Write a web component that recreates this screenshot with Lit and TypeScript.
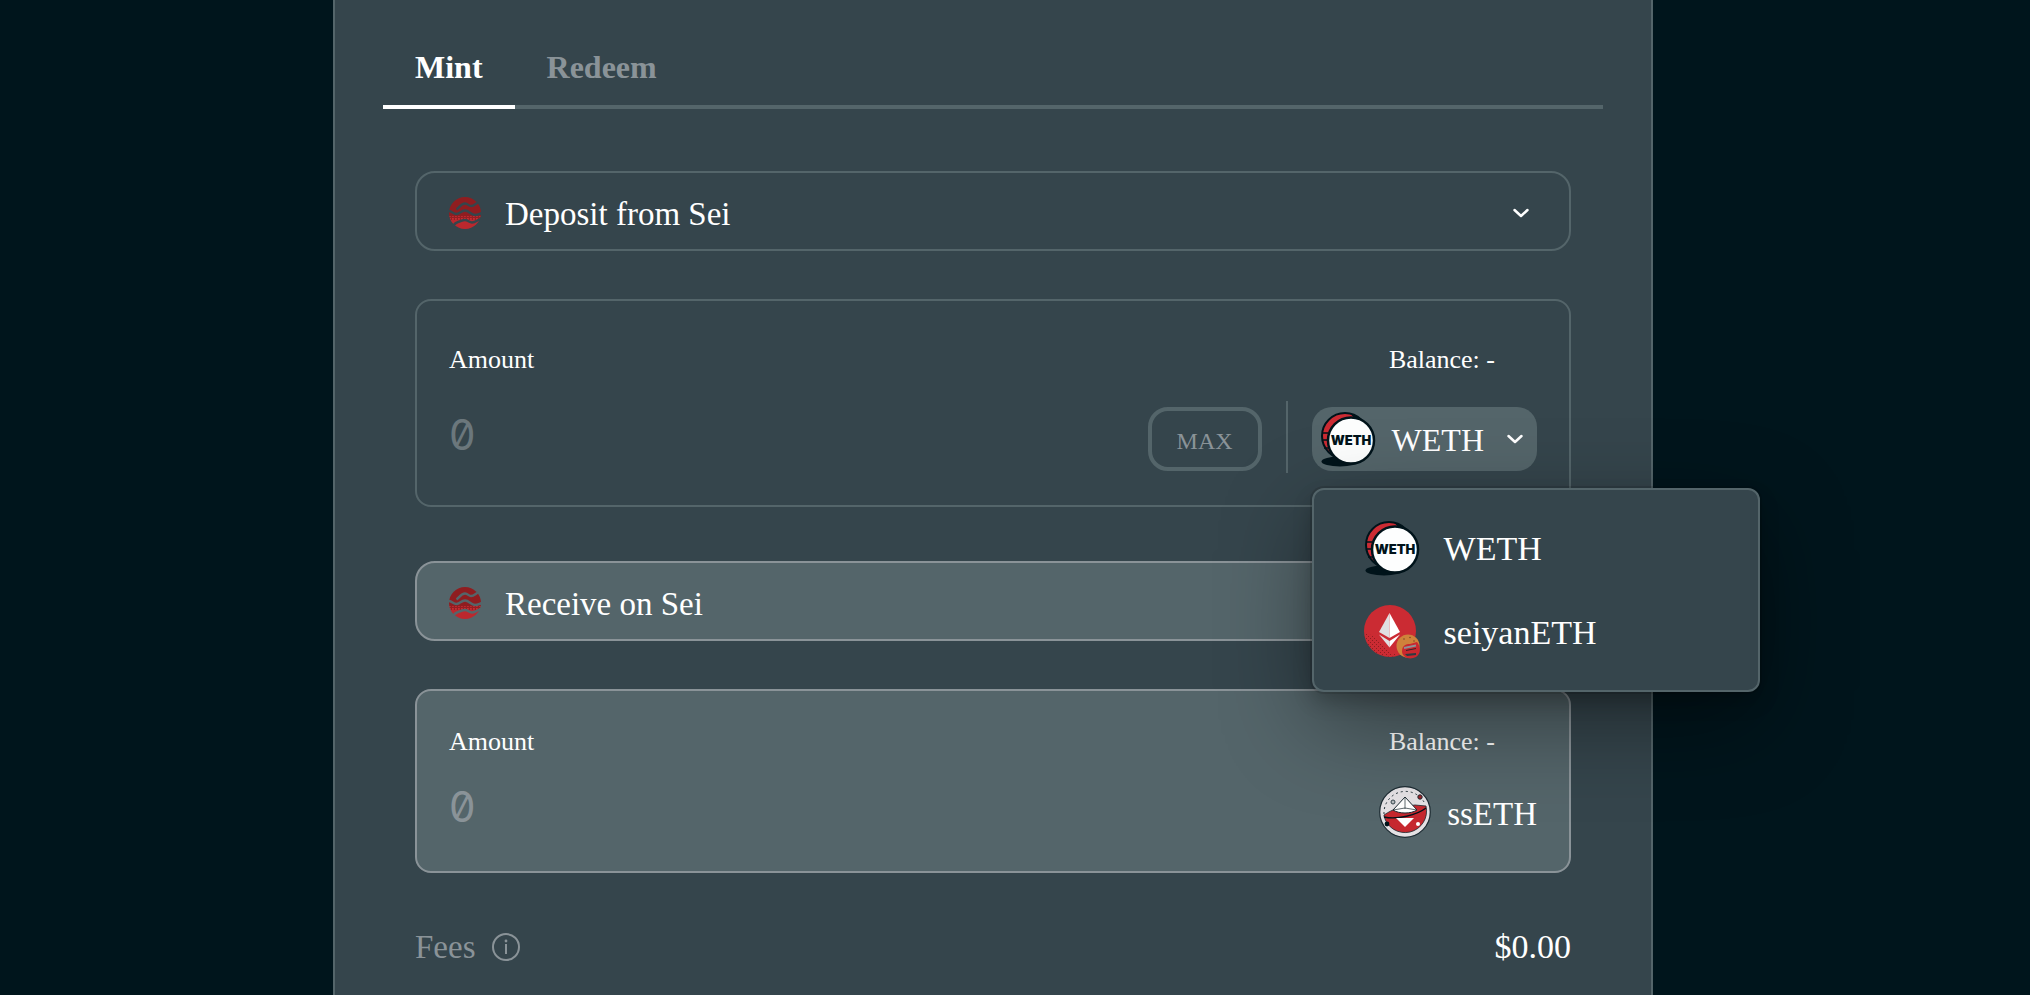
import { LitElement, html, css } from "lit";
import { customElement, property, state } from "lit/decorators.js";

type IconName = "sei" | "weth" | "seiyan" | "sseth" | "chevron" | "info";

const icons: Record<IconName, unknown> = {
  sei: html`<svg viewBox="0 0 32 32" width="32" height="32" aria-hidden="true">
    <defs>
      <pattern id="dots" width="3" height="3" patternUnits="userSpaceOnUse">
        <rect width="3" height="3" fill="#941f22" /><rect width="1.800" height="1.800" fill="#c92b32" />
      </pattern>
      <mask id="waves">
        <circle cx="16" cy="16" r="16" fill="#fff" />
        <g fill="none" stroke="#000" stroke-width="2.400">
          <path d="M7.500 12.500C10 11 12 6.500 16 6.500C19 6.500 19.500 9 22 9C25 9 26 7 29 5.500" />
          <path d="M-1 14C3 14 4 17 7.500 17C11 17 12 13.500 16 13.500C20 13.500 22 18 26 18C29 18 30 17 33 16" />
          <path d="M4 29C6 26 7 25.500 9 25C12 24.500 13 23 16 23C19 23 20 25.500 23 25.500C27 25.500 28 23 32 22" />
        </g>
      </mask>
    </defs>
    <g mask="url(#waves)">
      <rect width="32" height="32" fill="#8f1d20" /><rect y="19" width="32" height="4" fill="url(#dots)" /><rect y="23" width="32" height="9" fill="#bb282e" />
    </g>
  </svg>`,
  weth: html`<svg viewBox="0 0 56 56" width="56" height="56" aria-hidden="true">
    <ellipse cx="20" cy="50.500" rx="18.500" ry="5" fill="#00131a" />
    <circle cx="25" cy="25" r="23" fill="#cc2b33" stroke="#00131a" stroke-width="2" />
    <path d="M2 22h6M2 29h6M4 37h5" stroke="#00131a" stroke-width="1.500" />
    <path d="M30 2.500C37 4 41 8 45 12L37 10Z" fill="#00131a" />
    <circle cx="31" cy="29.500" r="23" fill="#fdfefe" stroke="#00131a" stroke-width="2.500" />
    <text x="31" y="34" text-anchor="middle" font-family="Inter, sans-serif" font-weight="900" font-size="13" fill="#00131a">WETH</text>
  </svg>`,
  seiyan: html`<svg viewBox="0 0 56 56" width="56" height="56" aria-hidden="true">
    <defs><pattern id="grain" width="4" height="4" patternUnits="userSpaceOnUse"><rect width="1" height="1" fill="#8f1d20" /><rect x="2" y="2" width="1" height="1" fill="#8f1d20" /></pattern></defs>
    <circle cx="26" cy="27" r="26" fill="#cb2b33" />
    <path d="M0 30C6 27 18 40 25 47C28 50 33 50 35 51A26 26 0 0 1 0 30Z" fill="url(#grain)" />
    <path d="M25.500 9L15 28L25.500 34Z" fill="#e0dfe2" /><path d="M25.500 9L36 28L25.500 34Z" fill="#fff" />
    <path d="M15 30.500L25.500 37V43.500Z" fill="#e0dfe2" /><path d="M36 30.500L25.500 37V43.500Z" fill="#fff" />
    <circle cx="44" cy="42" r="11.500" fill="#cf823b" />
    <path d="M38 48C38 41 42 40 46 40L53 38C57 43 57 50 52 53C46 56 39 54 38 48Z" fill="#c9282f" />
    <circle cx="40" cy="35" r=".8" fill="#7a4a22" /><circle cx="46" cy="33.500" r=".8" fill="#7a4a22" /><circle cx="50" cy="37" r=".8" fill="#7a4a22" />
    <path d="M40 44L52 41.500" stroke="#8d9296" stroke-width="1.800" />
    <path d="M41 50L52 49V51L43 52Z" fill="#2d3a41" /><path d="M42 46.500L52 44.500" stroke="#3b2026" stroke-width="1" />
  </svg>`,
  sseth: html`<svg viewBox="0 0 52 52" width="52" height="52" aria-hidden="true">
    <circle cx="26" cy="26" r="25.300" fill="#e4e1e4" stroke="#1c2b32" stroke-width="1.200" />
    <path d="M5 28A21.500 21.500 0 0 1 45 16" fill="none" stroke="#26343b" stroke-width="1" stroke-dasharray="2 3" />
    <path d="M5 29C14 23 20 21 36 19L47 20A21.500 21.500 0 0 1 5 30Z" fill="#c6282f" stroke="#1c2b32" stroke-width=".8" />
    <path d="M26 11L14 24C20 28 32 28 38 24Z" fill="#fff" stroke="#1c2b32" stroke-width="1" /><path d="M26 11V23M14 24L26 22L38 24" fill="none" stroke="#1c2b32" stroke-width=".7" />
    <path d="M5 31C18 34 38 29 47 22" fill="none" stroke="#00131a" stroke-width="1.300" />
    <path d="M17 32H35L26 41Z" fill="#fff" />
    <circle cx="41" cy="11" r="2.200" fill="#a32328" stroke="#1c2b32" /><circle cx="14" cy="16" r="2" fill="#b9bdc0" stroke="#35454c" /><circle cx="8" cy="38" r="2.400" fill="#00131a" /><circle cx="39" cy="38" r="2" fill="#fff" />
  </svg>`,
  chevron: html`<svg viewBox="0 0 16 16" width="16" height="16" aria-hidden="true"><path d="M1.500 5L8 11L14.500 5" fill="none" stroke="currentColor" stroke-width="2.500" stroke-linecap="round" stroke-linejoin="round" /></svg>`,
  info: html`<svg viewBox="0 0 28 28" width="28" height="28" aria-hidden="true"><circle cx="14" cy="14" r="13" fill="none" stroke="currentColor" stroke-width="2" /><path d="M14 11V21" stroke="currentColor" stroke-width="2" /><circle cx="14" cy="8" r="1.400" fill="currentColor" /></svg>`,
};

@customElement("app-icon")
export class AppIcon extends LitElement {
  @property() name: IconName = "sei";
  static styles = css`:host { display: flex; flex: none; } svg { display: block; }`;
  render() {
    return icons[this.name];
  }
}

@customElement("app-root")
export class AppRoot extends LitElement {
  @state() private tab = "Mint";
  @state() private token = "WETH";
  @state() private open = true;

  private tokens: { label: string; icon: IconName }[] = [
    { label: "WETH", icon: "weth" },
    { label: "seiyanETH", icon: "seiyan" },
  ];

  static styles = css`
    :host {
      --page: #00151c;
      --card: #35454c;
      --line: #54656a;
      --muted: #8a9398;
      display: block;
      min-height: 100vh;
      background: var(--page);
      color: #fff;
      font: 33px/40px "Liberation Serif", serif;
      overflow: hidden;
    }
    *, *::before { box-sizing: border-box; }
    button {
      font: inherit;
      color: inherit;
      background: none;
      border: 0;
      padding: 0;
      cursor: pointer;
      text-align: left;
    }
    .page { display: flex; justify-content: center; padding-right: 44px; }
    .card {
      width: 100%;
      max-width: 1320px;
      min-height: 100vh;
      padding: 29px 48px 24px;
      background: var(--card);
      border: solid var(--line);
      border-width: 0 2px;
    }
    .tabs { display: flex; box-shadow: inset 0 -4px var(--line); }
    .tab {
      padding: 18px 32px;
      border-bottom: 4px solid transparent;
      font-size: 32px;
      font-weight: 700;
      color: var(--muted);
    }
    .tab.active { color: #fff; border-color: #fff; }
    .form { display: flex; flex-direction: column; gap: 54px; padding: 62px 32px 0; }
    .group { display: flex; flex-direction: column; gap: 48px; }
    .chain {
      display: flex;
      align-items: center;
      gap: 24px;
      width: 100%;
      height: 80px;
      padding: 4px 40px 0 32px;
      border: 2px solid var(--line);
      border-radius: 20px;
    }
    .chain .name { flex: 1; padding-top: 2px; }
    .amount {
      display: flex;
      flex-direction: column;
      gap: 16px;
      padding: 32px;
      border: 2px solid var(--line);
      border-radius: 16px;
    }
    .filled { background: var(--line); border-color: var(--muted); }
    .amount.filled { gap: 8px; padding: 24px 32px; }
    .caption {
      display: flex;
      justify-content: space-between;
      padding: 2px 42px 0 0;
      font-size: 26px;
      line-height: 50px;
    }
    .entry { display: flex; align-items: center; gap: 24px; height: 72px; padding-top: 4px; }
    .filled .entry { padding-top: 2px; }
    input {
      flex: 1;
      min-width: 0;
      align-self: flex-start;
      height: 58px;
      padding: 0;
      border: 0;
      outline: 0;
      background: none;
      color: #fff;
      font: 400 42px Inter, sans-serif;
      font-feature-settings: "zero" 1;
    }
    input::placeholder { color: #6b777c; opacity: 1; }
    .filled input::placeholder { color: var(--muted); }
    .max {
      width: 114px;
      height: 64px;
      padding-top: 4px;
      border: 4px solid var(--line);
      border-radius: 20px;
      font-size: 24px;
      text-align: center;
      color: var(--muted);
    }
    .rule { align-self: flex-end; width: 2px; height: 72px; background: var(--line); }
    .picker { position: relative; }
    .picked {
      display: flex;
      align-items: center;
      gap: 16px;
      height: 64px;
      padding: 0 14px 0 8px;
      border-radius: 20px;
      background: var(--line);
      font-size: 32px;
    }
    .picked .name { padding: 2px 7px 0 0; }
    .menu {
      position: absolute;
      top: 81px;
      left: 0;
      z-index: 1;
      width: 448px;
      margin: 0;
      padding: 16px 0;
      list-style: none;
      background: var(--card);
      border: 2px solid var(--line);
      border-radius: 12px;
      box-shadow: 0 0 0 2px #0000001a, 0 10px 20px #00000033, 0 30px 90px #00000066;
    }
    .option {
      display: flex;
      align-items: center;
      gap: 24px;
      width: 100%;
      height: 84px;
      padding: 0 50px;
      font-size: 34px;
    }
    .option .name { padding-top: 2px; }
    .output { display: flex; align-items: center; gap: 16px; }
    .output .name { padding-top: 4px; }
    .fees { display: flex; justify-content: space-between; }
    .fees .label { display: flex; align-items: center; gap: 16px; color: var(--muted); }
    .fees .total { font-size: 34px; }
  `;

  private choose(label: string) {
    this.token = label;
    this.open = false;
  }

  render() {
    const current = this.tokens.find((t) => t.label === this.token)!;
    return html`
      <div class="page">
        <main class="card">
          <div class="tabs" role="tablist">
            ${["Mint", "Redeem"].map(
              (t) => html`<button class="tab ${t === this.tab ? "active" : ""}" role="tab" aria-selected=${t === this.tab} @click=${() => (this.tab = t)}>${t}</button>`
            )}
          </div>
          <div class="form">
            <section class="group">
              <button class="chain">
                <app-icon name="sei"></app-icon>
                <span class="name">Deposit from Sei</span>
                <app-icon name="chevron"></app-icon>
              </button>
              <div class="amount">
                <div class="caption"><label for="deposit">Amount</label><span>Balance: -</span></div>
                <div class="entry">
                  <input id="deposit" inputmode="decimal" placeholder="0" />
                  <button class="max">MAX</button>
                  <span class="rule"></span>
                  <div class="picker">
                    <button class="picked" aria-haspopup="menu" aria-expanded=${this.open} @click=${() => (this.open = !this.open)}>
                      <app-icon name=${current.icon}></app-icon>
                      <span class="name">${current.label}</span>
                      <app-icon name="chevron"></app-icon>
                    </button>
                    ${this.open
                      ? html`<ul class="menu">
                          ${this.tokens.map(
                            (t) => html`<li>
                              <button class="option" @click=${() => this.choose(t.label)}>
                                <app-icon name=${t.icon}></app-icon>
                                <span class="name">${t.label}</span>
                              </button>
                            </li>`
                          )}
                        </ul>`
                      : null}
                  </div>
                </div>
              </div>
            </section>
            <section class="group">
              <div class="chain filled">
                <app-icon name="sei"></app-icon>
                <span class="name">Receive on Sei</span>
              </div>
              <div class="amount filled">
                <div class="caption"><label for="receive">Amount</label><span>Balance: -</span></div>
                <div class="entry">
                  <input id="receive" placeholder="0" readonly />
                  <div class="output">
                    <app-icon name="sseth"></app-icon>
                    <span class="name">ssETH</span>
                  </div>
                </div>
              </div>
            </section>
            <div class="fees">
              <span class="label">Fees <app-icon name="info"></app-icon></span>
              <span class="total">$0.00</span>
            </div>
          </div>
        </main>
      </div>
    `;
  }
}
